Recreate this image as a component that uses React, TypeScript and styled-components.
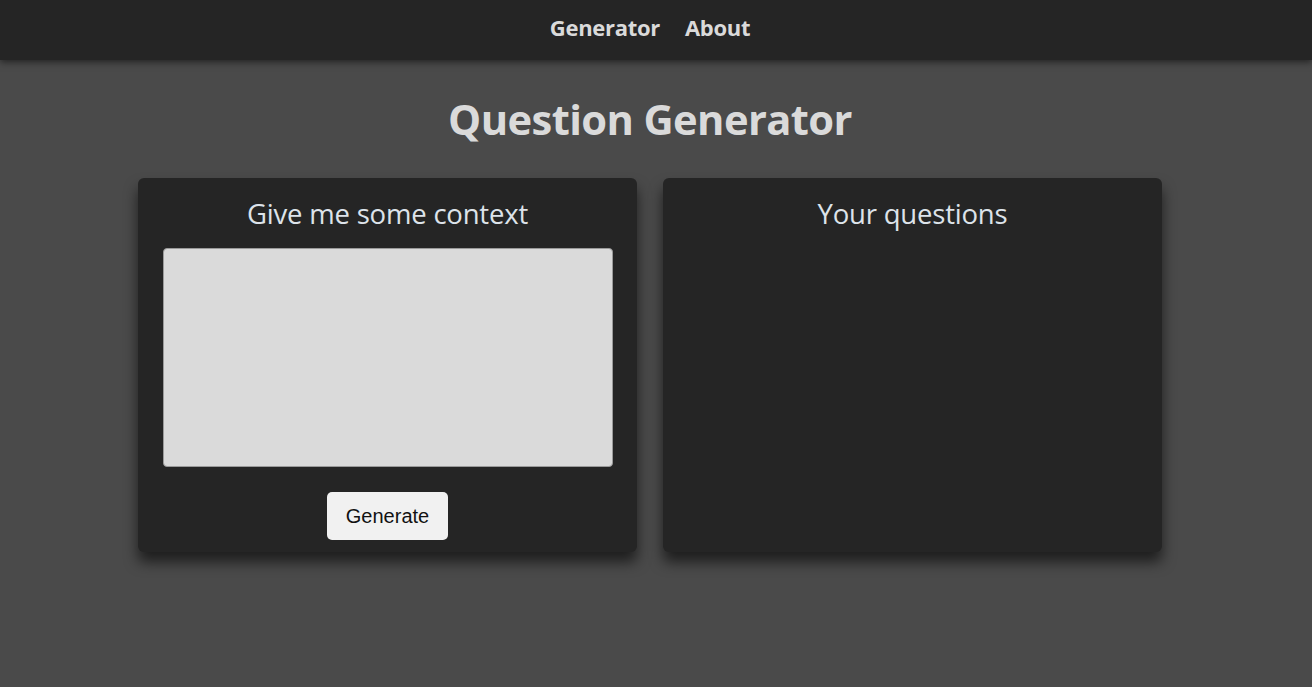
import React from "react";
import styled, { createGlobalStyle } from "styled-components";

const Global = createGlobalStyle`
  html, body { margin: 0; padding: 0; background: #4a4a4a; }
  body { font-family: "Open Sans", "Noto Sans", sans-serif; color: #dadada; }
  * { box-sizing: border-box; }
`;

const Page = styled.div`
  min-height: 687px;
  background: #4a4a4a;
`;

const NavBar = styled.nav`
  height: 60px;
  background: #252525;
  display: flex;
  justify-content: center;
  align-items: center;
  gap: 25px;
  box-shadow: 0 2px 7px rgba(0, 0, 0, 0.55);
  position: relative;
  padding: 0 12px 6px 0;
`;

const NavLink = styled.a`
  font-size: 22px;
  font-weight: 700;
  color: #dadada;
  text-decoration: none;
  letter-spacing: -0.3px;
`;

const Main = styled.main`
  padding-right: 12px;
`;

const Title = styled.h1`
  margin: 33px 0 33px;
  text-align: center;
  font-size: 41.7px;
  line-height: 52px;
  font-weight: 700;
  color: #dadada;
  letter-spacing: -0.6px;
`;

const Cards = styled.div`
  display: flex;
  justify-content: center;
  gap: 26px;
`;

const Card = styled.section`
  width: 499px;
  height: 374px;
  background: #252525;
  border-radius: 6px;
  box-shadow: 0 10px 14px rgba(0, 0, 0, 0.6);
  display: flex;
  flex-direction: column;
  align-items: center;
  padding: 17px 25px 12px;
`;

const CardTitle = styled.h2`
  margin: 0 0 16px;
  font-size: 27.5px;
  line-height: 37px;
  font-weight: 400;
  color: #dde3ea;
  letter-spacing: -0.2px;
`;

const ContextInput = styled.textarea`
  width: 450px;
  height: 220px;
  background: #dadada;
  border: 1px solid #9a9a9a;
  border-radius: 4px;
  resize: none;
  outline: none;
  margin-bottom: 25px;
`;

const GenerateButton = styled.button`
  width: 121px;
  height: 48px;
  background: #f1f1f1;
  border: none;
  border-radius: 5px;
  font-family: "Liberation Sans", Arial, sans-serif;
  font-size: 20px;
  color: #111;
  cursor: pointer;
`;

export default function App() {
  return (
    <>
      <Global />
      <Page>
        <NavBar>
          <NavLink href="#">Generator</NavLink>
          <NavLink href="#">About</NavLink>
        </NavBar>
        <Main>
          <Title>Question Generator</Title>
          <Cards>
            <Card>
              <CardTitle>Give me some context</CardTitle>
              <ContextInput />
              <GenerateButton>Generate</GenerateButton>
            </Card>
            <Card>
              <CardTitle>Your questions</CardTitle>
            </Card>
          </Cards>
        </Main>
      </Page>
    </>
  );
}
